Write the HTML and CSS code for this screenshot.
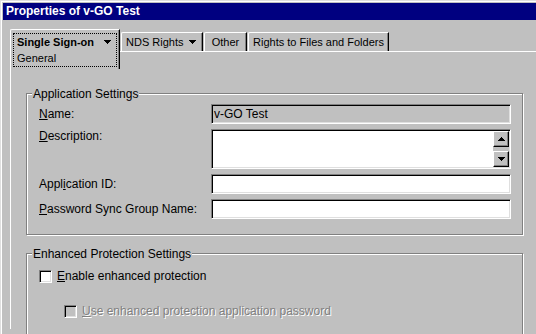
FILE: index.html
```html
<!DOCTYPE html>
<html lang="en">
<head>
  <meta charset="UTF-8" />
  <title>Properties of v-GO Test</title>
  <link rel="stylesheet" href="styles.css">
</head>
<body>

  <div class="window">
    <div class="titlebar">Properties of v-GO Test</div>

    <div class="client">
      <div class="tabstrip">
        <div class="tab-active">
          <div class="tab-focus">
            <div class="tab-line bold">
              <span>Single Sign-on</span>
              <svg class="caret" width="7" height="4" viewBox="0 0 7 4"><path d="M0 0h7v1h-1v1h-1v1h-1v1h-1v-1h-1v-1h-1v-1h-1z" fill="#000"/></svg>
            </div>
            <div class="tab-line">General</div>
          </div>
        </div>
        <div class="tab-rest">
          <div class="tab tab-nds">
            <span>NDS Rights</span>
            <svg class="caret" width="7" height="4" viewBox="0 0 7 4"><path d="M0 0h7v1h-1v1h-1v1h-1v1h-1v-1h-1v-1h-1v-1h-1z" fill="#000"/></svg>
          </div>
          <div class="tab tab-other">Other</div>
          <div class="tab tab-files">Rights to Files and Folders</div>
        </div>
      </div>

      <div class="pane">
        <div class="group group-app">
          <div class="group-title">Application Settings</div>
          <div class="form">
            <div class="field-label"><u>N</u>ame:</div>
            <div class="input input-disabled">v-GO Test</div>

            <div class="field-label label-top"><u>D</u>escription:</div>
            <div class="input textarea">
              <div class="scroll">
                <div class="sbtn">
                  <svg width="7" height="4" viewBox="0 0 7 4"><path d="M3 0h1v1h1v1h1v1h1v1h-7v-1h1v-1h1v-1h1z" fill="#000"/></svg>
                </div>
                <div class="sbtn">
                  <svg width="7" height="4" viewBox="0 0 7 4"><path d="M0 0h7v1h-1v1h-1v1h-1v1h-1v-1h-1v-1h-1v-1h-1z" fill="#000"/></svg>
                </div>
              </div>
            </div>

            <div class="field-label">Appl<u>i</u>cation ID:</div>
            <div class="input"></div>

            <div class="field-label"><u>P</u>assword Sync Group Name:</div>
            <div class="input"></div>
          </div>
        </div>

        <div class="group group-enh">
          <div class="group-title">Enhanced Protection Settings</div>
          <div class="check-row">
            <span class="check"></span>
            <span class="check-text"><u>E</u>nable enhanced protection</span>
          </div>
          <div class="check-row check-sub disabled">
            <span class="check"></span>
            <span class="check-text"><u>U</u>se enhanced protection application password</span>
          </div>
        </div>
      </div>
    </div>
  </div>

</body>
</html>
```

FILE: styles.css
```css
* {
  box-sizing: border-box;
}

body {
  margin: 0;
  font-family: "Liberation Sans", Arial, sans-serif;
  font-size: 12px;
  color: #000;
  background-color: #c0c0c0;
}

.window {
  width: 536px;
  height: 334px;
  overflow: hidden;
  background-color: #c0c0c0;
  border-top: 1px solid #dfdfdf;
  border-left: 1px solid #dfdfdf;
  box-shadow: inset 1px 1px 0 #fff;
  padding: 2px 0 0 2px;
}

.titlebar {
  height: 17px;
  line-height: 17px;
  background-color: #000080;
  color: #fff;
  font-weight: bold;
  padding-left: 3px;
}

.client {
  padding: 9px 0 0 7px;
}

/* tabs */
.tabstrip {
  display: flex;
  align-items: flex-start;
  font-size: 11px;
}

.tab-active {
  width: 110px;
  height: 40px;
  border-top: 1px solid #fff;
  border-left: 1px solid #fff;
  border-right: 1px solid #000;
  border-top-left-radius: 2px;
  box-shadow: inset -1px 0 0 #808080;
  padding: 3px 2px 2px 2px;
}

.tab-focus {
  height: 34px;
  border: 1px dotted #000;
  padding: 1px 0 0 3px;
}

.tab-line {
  display: flex;
  align-items: center;
  justify-content: space-between;
  height: 14px;
  line-height: 14px;
  padding-right: 5px;
}

.tab-line + .tab-line {
  margin-top: 2px;
}

.bold {
  font-weight: bold;
}

.tab-rest {
  flex: 1;
  display: flex;
  margin-top: 3px;
  height: 20px;
  border-bottom: 1px solid #fff;
}

.tab {
  height: 19px;
  line-height: 18px;
  margin-left: 1px;
  border-top: 1px solid #fff;
  border-left: 1px solid #fff;
  border-right: 1px solid #000;
  border-top-left-radius: 2px;
  box-shadow: inset -1px 0 0 #808080;
  text-align: center;
  white-space: nowrap;
}

.tab-nds {
  width: 82px;
  display: flex;
  align-items: center;
  justify-content: space-between;
  padding: 0 6px 0 4px;
}

.tab-other {
  width: 43px;
}

.tab-files {
  width: 141px;
}

/* pane */
.pane {
  height: 260px;
  border-left: 1px solid #fff;
  padding: 24px 13px 0 15px;
}

.group {
  border: 1px solid #808080;
  box-shadow: 1px 1px 0 #fff, inset 1px 1px 0 #fff;
}

.group-app {
  padding-bottom: 15px;
}

.group-enh {
  margin-top: 18px;
  height: 120px;
}

.group-title {
  width: fit-content;
  margin: -7px 0 0 5px;
  padding: 0 1px;
  line-height: 14px;
  background-color: #c0c0c0;
}

.form {
  display: grid;
  grid-template-columns: 172px 300px;
  row-gap: 5px;
  padding: 3px 11px 0 12px;
}

.field-label {
  align-self: center;
  line-height: 14px;
  white-space: nowrap;
}

.label-top {
  align-self: start;
}

.input {
  height: 20px;
  line-height: 17px;
  padding: 1px 2px 0;
  border: 1px solid;
  border-color: #808080 #fff #fff #808080;
  box-shadow: inset 1px 1px 0 #000, inset -1px -1px 0 #dfdfdf;
  background-color: #fff;
}

.input-disabled {
  background-color: #c0c0c0;
}

.textarea {
  height: 40px;
  display: flex;
  justify-content: flex-end;
  padding: 1px;
}

.scroll {
  width: 16px;
  display: flex;
  flex-direction: column;
  justify-content: space-between;
  background-color: #c0c0c0;
}

.sbtn {
  height: 16px;
  display: flex;
  align-items: center;
  justify-content: center;
  border: 1px solid;
  border-color: #fff #000 #000 #fff;
  box-shadow: inset -1px -1px 0 #808080;
  background-color: #c0c0c0;
}

/* checkboxes */
.check-row {
  display: flex;
  align-items: center;
  height: 13px;
  line-height: 13px;
  margin-top: 9px;
  padding-left: 12px;
  white-space: nowrap;
}

.check-sub {
  margin-top: 22px;
  padding-left: 37px;
}

.check {
  width: 13px;
  height: 13px;
  flex: none;
  border: 1px solid;
  border-color: #808080 #fff #fff #808080;
  box-shadow: inset 1px 1px 0 #000, inset -1px -1px 0 #dfdfdf;
  background-color: #fff;
}

.check-text {
  margin-left: 5px;
}

.disabled .check {
  background-color: #c0c0c0;
}

.disabled .check-text {
  color: #808080;
  text-shadow: 1px 1px 0 #fff;
}
```
